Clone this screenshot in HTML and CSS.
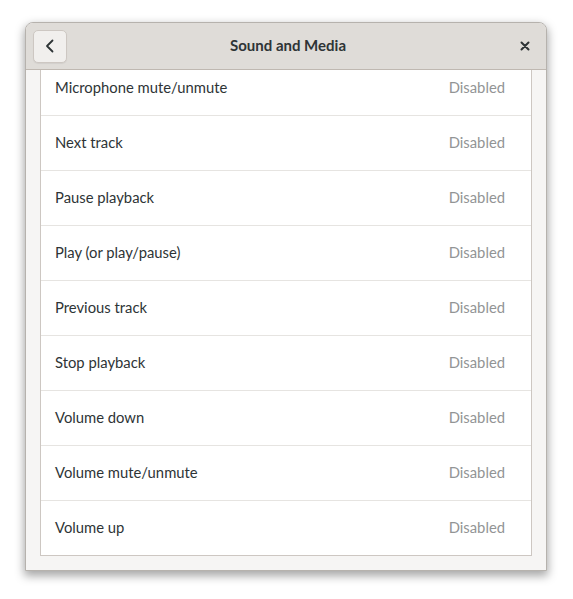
FILE: index.html
```html
<!DOCTYPE html>
<html>
<head>
<meta charset="utf-8">
<link rel="stylesheet" href="styles.css">
</head>
<body>
<div class="window">
  <header class="headerbar">
    <button class="back" aria-label="Back">
      <svg width="16" height="16" viewBox="0 0 16 16"><path d="M10.5 2.5 L5 8 L10.5 13.5" fill="none" stroke="#2e3436" stroke-width="1.8" stroke-linecap="round" stroke-linejoin="round"/></svg>
    </button>
    <div class="title">Sound and Media</div>
    <button class="close" aria-label="Close">
      <svg width="12" height="12" viewBox="0 0 12 12"><path d="M2.5 2.5 L9.5 9.5 M9.5 2.5 L2.5 9.5" fill="none" stroke="#2e3436" stroke-width="2" stroke-linecap="round"/></svg>
    </button>
  </header>
  <div class="scroller">
    <div class="list">
      <div class="row"><span class="name">Microphone mute/unmute</span><span class="value">Disabled</span></div>
      <div class="row"><span class="name">Next track</span><span class="value">Disabled</span></div>
      <div class="row"><span class="name">Pause playback</span><span class="value">Disabled</span></div>
      <div class="row"><span class="name">Play (or play/pause)</span><span class="value">Disabled</span></div>
      <div class="row"><span class="name">Previous track</span><span class="value">Disabled</span></div>
      <div class="row"><span class="name">Stop playback</span><span class="value">Disabled</span></div>
      <div class="row"><span class="name">Volume down</span><span class="value">Disabled</span></div>
      <div class="row"><span class="name">Volume mute/unmute</span><span class="value">Disabled</span></div>
      <div class="row"><span class="name">Volume up</span><span class="value">Disabled</span></div>
    </div>
  </div>
</div>
</body>
</html>
```
FILE: styles.css
```css
html, body {
  margin: 0;
  padding: 0;
  background: #ffffff;
}
body {
  padding: 22px 0 28px 25px;
  font-family: "Lato", "Noto Sans", sans-serif;
  color: #2e3436;
}
.window {
  width: 520px;
  height: 547px;
  border: 1px solid #b6b2ad;
  border-radius: 8px 8px 0 0;
  background: #f6f5f4;
  box-shadow: 0 4px 10px 1px rgba(0, 0, 0, 0.35);
  overflow: hidden;
  display: flex;
  flex-direction: column;
}
.headerbar {
  height: 46px;
  flex: none;
  background: #dfdcd8;
  border-bottom: 1px solid #bfb8b1;
  display: flex;
  align-items: center;
  padding: 0 7px;
}
.back {
  width: 34px;
  height: 33px;
  border: 1px solid #cdc7c2;
  border-radius: 5px;
  background: #f1efed;
  display: flex;
  align-items: center;
  justify-content: center;
  padding: 0;
  box-shadow: 0 1px 1px rgba(0,0,0,0.06);
}
.title {
  flex: 1;
  text-align: center;
  font-weight: bold;
  font-size: 15px;
  padding-right: 2px;
  margin-top: -2px;
}
.close {
  width: 28px;
  height: 33px;
  border: none;
  background: transparent;
  display: flex;
  align-items: center;
  justify-content: center;
  padding: 0;
  margin-right: 0;
}
.scroller {
  flex: 1;
  overflow: hidden;
  padding: 0 14px;
}
.list {
  margin-top: -10px;
  background: #ffffff;
  border: 1px solid #cdc7c2;
}
.row {
  height: 52px;
  display: flex;
  align-items: center;
  justify-content: space-between;
  padding: 0 26px 2px 14px;
  font-size: 14.8px;
  border-top: 1px solid #e6e4e1;
}
.row:first-child {
  border-top: none;
}
.row .name, .row .value {
  line-height: 18px;
}
.value {
  color: #929495;
}
```
